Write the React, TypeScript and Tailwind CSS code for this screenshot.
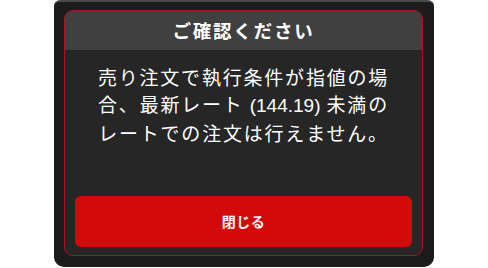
import React from "react";

export default function App() {
  return (
    <div className="w-[488px] h-[268px] bg-white flex justify-center" style={{ fontFamily: '"Noto Sans CJK JP", "Noto Sans", sans-serif' }}>
      <div className="w-[380px] h-[267px] bg-[#1b1b1b] border-t-2 border-[#4a4a4a] rounded-t-[6px] rounded-b-[10px] pt-[8px] pl-[10px] pr-[11px] pb-[11px] flex">
        <div className="flex-1 flex flex-col border border-[#b3121a] rounded-[9px] overflow-hidden bg-[#262626]">
          <div className="h-[39px] bg-[#404040] flex items-center justify-center text-white font-bold text-[18.5px] tracking-[1.8px] leading-none">
            ご確認ください
          </div>
          <div className="flex-1 flex flex-col px-[10px] pb-[8px]">
            <div className="flex-1 pt-[13px] text-center text-white text-[19px] leading-[27px] tracking-[1.8px]">
              <div>売り注文で執行条件が指値の場</div>
              <div>
                合、最新レート <span className="tracking-normal" style={{ fontFamily: '"Liberation Sans", sans-serif' }}>(144.19)</span> 未満の
              </div>
              <div>レートでの注文は行えません。</div>
            </div>
            <div className="h-[51px] bg-[#d20a0a] rounded-[6px] flex items-center justify-center text-white font-bold text-[14px] tracking-[0.5px]">
              閉じる
            </div>
          </div>
        </div>
      </div>
    </div>
  );
}
